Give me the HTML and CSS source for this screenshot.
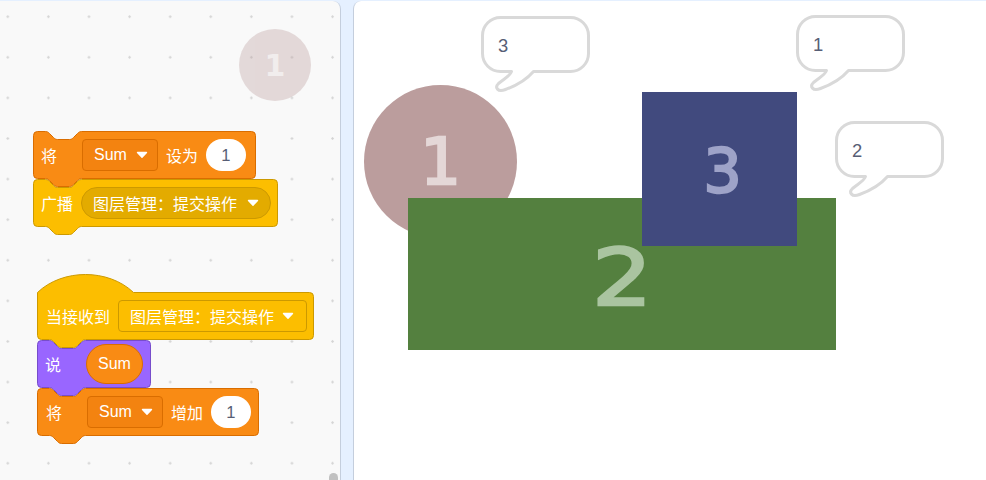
FILE: index.html
```html
<!DOCTYPE html>
<html lang="zh-CN">
<head>
<meta charset="utf-8">
<title>Scratch</title>
<link rel="stylesheet" href="styles.css">
</head>
<body>
<div class="app">
  <section class="workspace">
    <div class="ghost"><span>1</span></div>

    <div class="stack stack-a">
      <div class="block var b-set">
        <svg class="shape" width="223" height="58"><path transform="translate(0.5 0.5)" d="M0 4A4 4 0 0 1 4 0H12c2 0 3 1 4 2l4 4c1 1 2 2 4 2h12c2 0 3-1 4-2l4-4c1-1 2-2 4-2H218A4 4 0 0 1 222 4V43A4 4 0 0 1 218 47H48c-2 0-3 1-4 2l-4 4c-1 1-2 2-4 2H24c-2 0-3-1-4-2l-4-4c-1-1-2-2-4-2H4A4 4 0 0 1 0 43Z"/></svg>
        <span class="lbl lead">将</span>
        <span class="dd">Sum<svg class="caret" width="12" height="8"><path d="M1.5 1.5L6 6.2L10.5 1.5Z"/></svg></span>
        <span class="lbl">设为</span>
        <span class="num">1</span>
      </div>
      <div class="block event b-bcast">
        <svg class="shape" width="245" height="58"><path transform="translate(0.5 0.5)" d="M0 4A4 4 0 0 1 4 0H12c2 0 3 1 4 2l4 4c1 1 2 2 4 2h12c2 0 3-1 4-2l4-4c1-1 2-2 4-2H240A4 4 0 0 1 244 4V43A4 4 0 0 1 240 47H48c-2 0-3 1-4 2l-4 4c-1 1-2 2-4 2H24c-2 0-3-1-4-2l-4-4c-1-1-2-2-4-2H4A4 4 0 0 1 0 43Z"/></svg>
        <span class="lbl">广播</span>
        <span class="menu menu-oval">图层管理：提交操作<svg class="caret" width="12" height="8"><path d="M1.5 1.5L6 6.2L10.5 1.5Z"/></svg></span>
      </div>
    </div>

    <div class="stack stack-b">
      <div class="block event b-hat">
        <svg class="shape hat" width="277" height="76"><path transform="translate(0.5 18.5)" d="M0 0c25-24 71-24 96 0H272A4 4 0 0 1 276 4V43A4 4 0 0 1 272 47H48c-2 0-3 1-4 2l-4 4c-1 1-2 2-4 2H24c-2 0-3-1-4-2l-4-4c-1-1-2-2-4-2H4A4 4 0 0 1 0 43Z"/></svg>
        <span class="lbl">当接收到</span>
        <span class="menu menu-rect">图层管理：提交操作<svg class="caret" width="12" height="8"><path d="M1.5 1.5L6 6.2L10.5 1.5Z"/></svg></span>
      </div>
      <div class="block looks b-say">
        <svg class="shape" width="114" height="58"><path transform="translate(0.5 0.5)" d="M0 4A4 4 0 0 1 4 0H12c2 0 3 1 4 2l4 4c1 1 2 2 4 2h12c2 0 3-1 4-2l4-4c1-1 2-2 4-2H109A4 4 0 0 1 113 4V43A4 4 0 0 1 109 47H48c-2 0-3 1-4 2l-4 4c-1 1-2 2-4 2H24c-2 0-3-1-4-2l-4-4c-1-1-2-2-4-2H4A4 4 0 0 1 0 43Z"/></svg>
        <span class="lbl lead">说</span>
        <span class="reporter">Sum</span>
      </div>
      <div class="block var b-change">
        <svg class="shape" width="222" height="58"><path transform="translate(0.5 0.5)" d="M0 4A4 4 0 0 1 4 0H12c2 0 3 1 4 2l4 4c1 1 2 2 4 2h12c2 0 3-1 4-2l4-4c1-1 2-2 4-2H217A4 4 0 0 1 221 4V43A4 4 0 0 1 217 47H48c-2 0-3 1-4 2l-4 4c-1 1-2 2-4 2H24c-2 0-3-1-4-2l-4-4c-1-1-2-2-4-2H4A4 4 0 0 1 0 43Z"/></svg>
        <span class="lbl lead">将</span>
        <span class="dd">Sum<svg class="caret" width="12" height="8"><path d="M1.5 1.5L6 6.2L10.5 1.5Z"/></svg></span>
        <span class="lbl">增加</span>
        <span class="num">1</span>
      </div>
    </div>

    <div class="scroll-thumb"></div>
  </section>

  <section class="stage">
    <div class="sprite sprite-circle"><span class="digit d1">1</span></div>
    <div class="sprite sprite-green"><span class="digit d2">2</span></div>
    <div class="sprite sprite-blue"><span class="digit d3">3</span></div>

    <div class="bubble bubble-3">
      <svg class="bubble-shape" width="110" height="80"><path transform="translate(1.5 1.5)" d="M18 0H88A18 18 0 0 1 106 18V36A18 18 0 0 1 88 54H51C45 61 34 68 23 72C15 75 12 70 16 66C22 61 28 58 29 54H18A18 18 0 0 1 0 36V18A18 18 0 0 1 18 0Z"/></svg>
      <span class="bubble-text">3</span>
    </div>
    <div class="bubble bubble-1">
      <svg class="bubble-shape" width="110" height="80"><path transform="translate(1.5 1.5)" d="M18 0H88A18 18 0 0 1 106 18V36A18 18 0 0 1 88 54H51C45 61 34 68 23 72C15 75 12 70 16 66C22 61 28 58 29 54H18A18 18 0 0 1 0 36V18A18 18 0 0 1 18 0Z"/></svg>
      <span class="bubble-text">1</span>
    </div>
    <div class="bubble bubble-2">
      <svg class="bubble-shape" width="110" height="80"><path transform="translate(1.5 1.5)" d="M18 0H88A18 18 0 0 1 106 18V36A18 18 0 0 1 88 54H51C45 61 34 68 23 72C15 75 12 70 16 66C22 61 28 58 29 54H18A18 18 0 0 1 0 36V18A18 18 0 0 1 18 0Z"/></svg>
      <span class="bubble-text">2</span>
    </div>
  </section>
</div>
</body>
</html>
```
FILE: styles.css
```css
* { box-sizing: border-box; }
html, body { margin: 0; height: 100%; }
body {
  background: #e5f0ff;
  font-family: "Liberation Sans", "Noto Sans CJK SC", sans-serif;
  overflow: hidden;
}
.app {
  display: flex;
  gap: 12px;
  height: 100vh;
  padding-top: 1px;
}

/* ---------- code workspace ---------- */
.workspace {
  position: relative;
  flex: none;
  width: 341px;
  background-color: #f9f9f9;
  background-image: radial-gradient(circle at center, #d4d4d4 0, #d4d4d4 0.9px, transparent 1.5px);
  background-size: 40.6px 40.6px;
  background-position: -12.5px -4.6px;
  border-right: 1px solid #c4cedd;
  border-top-right-radius: 8px;
  overflow: hidden;
}
.ghost {
  position: absolute;
  left: 239px;
  top: 28px;
  width: 72px;
  height: 72px;
  border-radius: 50%;
  background: #bb9d9d;
  opacity: 0.35;
  display: flex;
  align-items: center;
  justify-content: center;
  color: #e4d7d7;
  font: bold 30px "DejaVu Sans", sans-serif;
}
.stack {
  position: absolute;
  display: flex;
  flex-direction: column;
  align-items: flex-start;
}
.stack-a { left: 33px; top: 130px; }
.stack-b { left: 37px; top: 291px; }

.block {
  position: relative;
  flex: none;
  display: flex;
  align-items: center;
  gap: 8px;
  height: 48px;
  padding-left: 8px;
  color: #fff;
  font-size: 16px;
  white-space: nowrap;
}
.stack .block:nth-child(1) { z-index: 5; }
.stack .block:nth-child(2) { z-index: 4; }
.stack .block:nth-child(3) { z-index: 3; }
.shape {
  position: absolute;
  left: 0;
  top: 0;
  z-index: -1;
  overflow: visible;
}
.shape.hat { top: -18px; }
.var .shape path { fill: #f98b14; stroke: #d96d00; }
.event .shape path { fill: #fcbe00; stroke: #cc9900; }
.looks .shape path { fill: #9966ff; stroke: #774dcb; }

.b-set { width: 223px; }
.b-bcast { width: 245px; }
.b-hat { width: 277px; padding-left: 9px; }
.b-say { width: 114px; }
.b-change { width: 222px; padding-left: 9px; }

.lead { margin-right: 17px; }

.caret path { fill: #fff; stroke: #fff; stroke-width: 1.4; stroke-linejoin: round; }

.dd {
  display: flex;
  align-items: center;
  gap: 9px;
  height: 32px;
  padding: 0 9px 0 11px;
  background: #f38310;
  border: 1px solid #d96d00;
  border-radius: 4px;
}
.menu {
  display: flex;
  align-items: center;
  gap: 10px;
  height: 32px;
  padding: 0 11px;
  border: 1px solid #cc9900;
}
.menu-oval { background: #e3ab00; border-radius: 16px; }
.menu-rect { background: #fcbe00; border-radius: 4px; gap: 8px; padding: 0 12px 0 11px; }
.num {
  display: flex;
  align-items: center;
  justify-content: center;
  width: 40px;
  height: 32px;
  border-radius: 16px;
  background: #fff;
  color: #575e75;
  font-size: 16.5px;
}
.reporter {
  display: flex;
  align-items: center;
  height: 40px;
  padding: 0 11px;
  border-radius: 20px;
  background: #f98b14;
  border: 1px solid #d96d00;
}
.scroll-thumb {
  position: absolute;
  left: 329px;
  top: 472px;
  width: 9px;
  height: 30px;
  border-radius: 5px;
  background: #c1c1c1;
}

/* ---------- stage ---------- */
.stage {
  position: relative;
  flex: 1;
  background: #fff;
  border-left: 1px solid #c4cedd;
  border-top-left-radius: 8px;
  overflow: hidden;
}
.sprite {
  position: absolute;
  display: flex;
  align-items: center;
  justify-content: center;
}
.digit {
  font-family: "DejaVu Sans", sans-serif;
  line-height: 1;
}
.sprite-circle {
  left: 10px;
  top: 84px;
  width: 153px;
  height: 153px;
  border-radius: 50%;
  background: #bb9d9d;
}
.d1 { font-size: 64px; color: #e4d7d7; -webkit-text-stroke: 2.4px #e4d7d7; }
.sprite-green {
  left: 54px;
  top: 197px;
  width: 428px;
  height: 152px;
  background: #54803f;
  padding-top: 9px;
}
.d2 { font-size: 79px; color: #aac4a0; -webkit-text-stroke: 2.4px #aac4a0; transform: scaleX(1.2); }
.sprite-blue {
  left: 288px;
  top: 91px;
  width: 155px;
  height: 154px;
  background: #414a7e;
  padding: 3px 0 0 6px;
}
.d3 { font-size: 60px; color: #9ea3c8; -webkit-text-stroke: 2.4px #9ea3c8; }

.bubble {
  position: absolute;
  width: 110px;
  height: 80px;
}
.bubble-shape { position: absolute; left: 0; top: 0; }
.bubble-shape path { fill: #fff; stroke: #d9d9d9; stroke-width: 3; stroke-linejoin: round; }
.bubble-text {
  position: absolute;
  left: 17px;
  top: 20px;
  font-size: 18.4px;
  line-height: 20px;
  color: #575e75;
}
.bubble-3 { left: 127px; top: 15px; }
.bubble-1 { left: 442px; top: 14px; }
.bubble-2 { left: 481px; top: 120px; }
```
